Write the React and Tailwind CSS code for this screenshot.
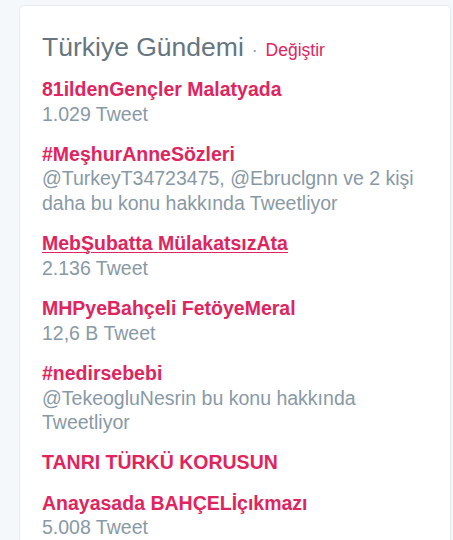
export default function App() {
  const items = [
    { title: "81ildenGençler Malatyada", sub: "1.029 Tweet" },
    { title: "#MeşhurAnneSözleri", sub: "@TurkeyT34723475, @Ebruclgnn ve 2 kişi daha bu konu hakkında Tweetliyor" },
    { title: "MebŞubatta MülakatsızAta", sub: "2.136 Tweet", underline: true },
    { title: "MHPyeBahçeli FetöyeMeral", sub: "12,6 B Tweet" },
    { title: "#nedirsebebi", sub: "@TekeogluNesrin bu konu hakkında Tweetliyor" },
    { title: "TANRI TÜRKÜ KORUSUN" },
    { title: "Anayasada BAHÇELİçıkmazı", sub: "5.008 Tweet" },
  ];
  return (
    <div
      className="h-[540px] w-[453px] overflow-hidden bg-[#f5f8fa] pl-[19px] pt-[5px] pr-[2px]"
      style={{ fontFamily: '"Liberation Sans", Arial, sans-serif' }}
    >
      <div className="h-[560px] rounded-t-[5px] border border-[#e6ecf0] bg-white pl-[22px] pr-[22px] pt-[25px]">
        <div className="mb-[11px] flex items-baseline leading-[32px]">
          <span className="text-[26.5px] text-[#66757f]">Türkiye Gündemi</span>
          <span className="mx-[8px] text-[17.5px] text-[#8899a6]">·</span>
          <a className="text-[17.5px] text-[#e0245e]">Değiştir</a>
        </div>
        <div className="flex flex-col gap-[15.9px]">
          {items.map((it, i) => (
            <div key={i} className="text-[19.5px] leading-[24.5px]">
              <div
                className={
                  it.underline
                    ? "font-bold text-[#e0245e] underline decoration-1 underline-offset-2"
                    : "font-bold text-[#e0245e]"
                }
              >
                {it.title}
              </div>
              {it.sub && <div className="text-[#8899a6]">{it.sub}</div>}
            </div>
          ))}
        </div>
      </div>
    </div>
  );
}
